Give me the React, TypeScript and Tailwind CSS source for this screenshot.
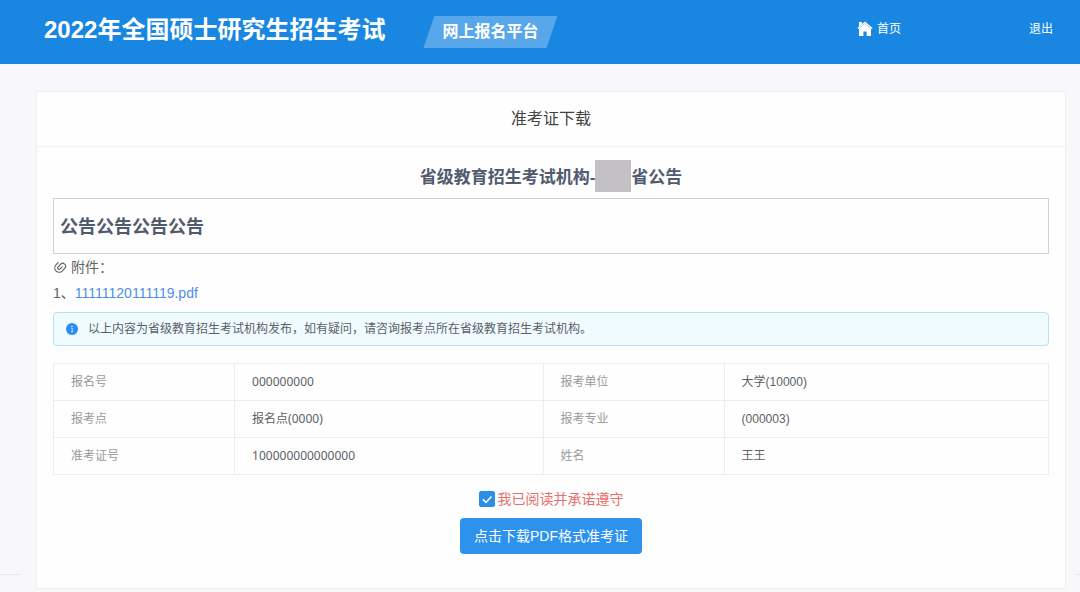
import { useState } from "react";

const rows = [
  { label: "报名号", value: "000000000", label2: "报考单位", value2: "大学(10000)" },
  { label: "报考点", value: "报名点(0000)", label2: "报考专业", value2: "(000003)" },
  { label: "准考证号", value: "100000000000000", label2: "姓名", value2: "王王" },
];

function HomeIcon() {
  return (
    <svg viewBox="0 0 16 16" className="size-4" fill="currentColor" aria-hidden>
      <path d="M2 1h3v2.4L2 6z" />
      <path d="M8 0.4 0.4 7l1 1L8 2.3 14.6 8l1-1z" />
      <path d="M8 2.6 2 7.800V15h4.400v-4.600h3.200V15H14V7.800z" />
    </svg>
  );
}

function ClipIcon() {
  return (
    <svg
      viewBox="0 0 24 24"
      className="size-3.5"
      fill="none"
      stroke="currentColor"
      strokeWidth="2"
      strokeLinecap="round"
      aria-hidden
    >
      <path
        transform="rotate(42 12 12)"
        d="M14.500 9.500v4.500a2.500 2.500 0 0 1-5 0V8a5 5 0 0 1 10 0v6a7.500 7.500 0 0 1-15 0V8.500"
      />
    </svg>
  );
}

function InfoIcon() {
  return (
    <svg viewBox="0 0 12 12" className="size-3" aria-hidden>
      <circle cx="6" cy="6" r="6" fill="#2d8cf0" />
      <circle cx="6" cy="3.400" r="0.700" fill="#fff" />
      <path d="M5.200 5.200H6.200V8.600M5 8.700h2.200" stroke="#fff" strokeWidth="0.700" fill="none" />
    </svg>
  );
}

function Header() {
  return (
    <header className="flex h-16 items-center bg-[#1987e1] pr-[27px] pl-11 text-white">
      <h1 className="pb-1 text-2xl font-bold whitespace-nowrap">2022年全国硕士研究生招生考试</h1>
      <span className="ml-[38px] bg-[#57a7ea] px-[19px] text-base leading-8 font-bold whitespace-nowrap [clip-path:polygon(11px_0,100%_0,calc(100%-11px)_100%,0_100%)]">
        网上报名平台
      </span>
      <nav className="ml-auto flex items-center gap-32 pb-1.5 text-xs">
        <a href="#home" className="flex items-center gap-1">
          <HomeIcon />
          首页
        </a>
        <a href="#logout">退出</a>
      </nav>
    </header>
  );
}

function InfoTable() {
  return (
    <table className="mt-[17px] w-full table-fixed border-collapse text-left text-xs text-[#5c6066]">
      <colgroup>
        <col className="w-[18.2%]" />
        <col className="w-[31%]" />
        <col className="w-[18.2%]" />
        <col />
      </colgroup>
      <tbody>
        {rows.map((row) => (
          <tr key={row.label} className="h-[37px]">
            <th scope="row" className="border border-[#eeebf1] px-[17px] font-normal text-[#999999]">
              {row.label}
            </th>
            <td className="border border-[#eeebf1] px-[17px] font-['Noto_Sans','Noto_Sans_CJK_SC',sans-serif]">
              {row.value}
            </td>
            <th scope="row" className="border border-[#eeebf1] px-[17px] font-normal text-[#999999]">
              {row.label2}
            </th>
            <td className="border border-[#eeebf1] px-[17px]">{row.value2}</td>
          </tr>
        ))}
      </tbody>
    </table>
  );
}

function DownloadForm() {
  const [agreed, setAgreed] = useState(true);

  return (
    <div className="flex flex-col items-center pt-3.5 pb-[34px] text-sm">
      <label className="flex items-center gap-[3px] text-[#e8706f]">
        <span className="relative flex size-4">
          <input
            type="checkbox"
            checked={agreed}
            onChange={(e) => setAgreed(e.target.checked)}
            className="peer size-4 appearance-none rounded-xs border border-[#2d8cf0] bg-white checked:bg-[#2b8fe8]"
          />
          <svg
            viewBox="0 0 16 16"
            className="pointer-events-none absolute inset-0 hidden size-4 peer-checked:block"
            fill="none"
            stroke="#fff"
            strokeWidth="1.500"
            aria-hidden
          >
            <path d="M3.800 8.400 7 11.400 12.400 5.600" />
          </svg>
        </span>
        我已阅读并承诺遵守
      </label>
      <button
        type="button"
        disabled={!agreed}
        className="mt-[9px] h-9 rounded-sm bg-[#2c92ec] px-3.5 text-white"
      >
        点击下载PDF格式准考证
      </button>
    </div>
  );
}

export default function App() {
  return (
    <div className="min-h-screen bg-[#f8f7fa] font-['Liberation_Sans','Noto_Sans_CJK_SC',sans-serif]">
      <Header />
      <div className="flex items-end pt-[27px]">
        <div className="w-9 shrink-0 pr-4 pb-3.5">
          <hr className="border-[#ebe9ee]" />
        </div>
        <main className="min-w-0 flex-1 border border-[#efedf1] bg-[#fefefe]">
          <h2 className="border-b border-[#f2f0f4] text-center text-base leading-[54px] text-[#444444]">
            准考证下载
          </h2>
          <div className="px-4 pt-[13px]">
            <h3 className="flex items-start justify-center pb-1 text-[17px] leading-8 font-bold text-[#515a6e]">
              <span className="pt-0.5">省级教育招生考试机构-</span>
              <span className="h-8 w-9 bg-[#c4c1c6]" />
              <span className="pt-0.5">省公告</span>
            </h3>
            <div className="border border-[#d3d0d6] px-1.5 pt-0.5 text-lg leading-[52px] font-bold text-[#515a6e]">
              公告公告公告公告
            </div>
            <div className="text-sm leading-[26px] text-[#606266]">
              <p className="flex items-center gap-1">
                <ClipIcon />
                附件：
              </p>
              <p>
                1、
                <a href="#pdf" className="text-[#4a90e8]">
                  11111120111119.pdf
                </a>
              </p>
            </div>
            <div className="mt-1.5 flex items-center gap-2.5 rounded-sm border border-[#b5e3f0] bg-[#effbff] px-3 text-xs leading-8 text-[#5c6066]">
              <InfoIcon />
              以上内容为省级教育招生考试机构发布，如有疑问，请咨询报考点所在省级教育招生考试机构。
            </div>
            <InfoTable />
            <DownloadForm />
          </div>
        </main>
        <div className="w-3.5 shrink-0 pb-3.5 pl-2.5">
          <hr className="border-[#ebe9ee]" />
        </div>
      </div>
    </div>
  );
}
